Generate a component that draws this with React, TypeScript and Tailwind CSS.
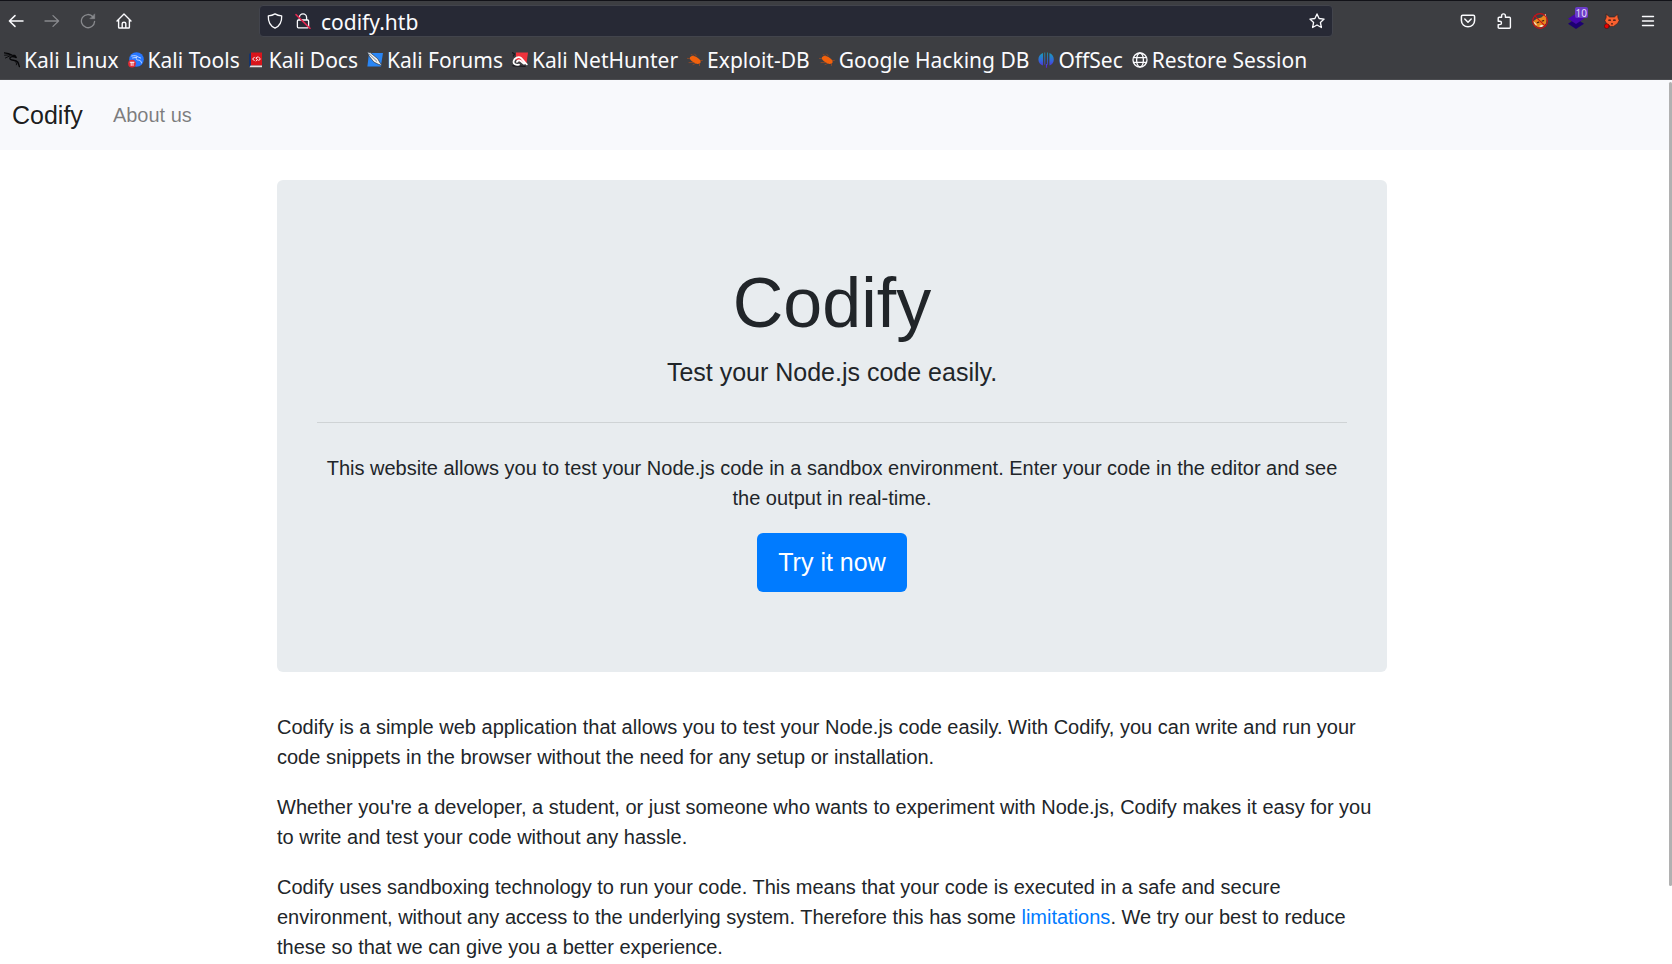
import type { ReactNode } from "react";

type IconProps = { children: ReactNode; className?: string; box?: string };

function Glyph({ children, className = "size-4", box = "0 0 16 16" }: IconProps) {
  return (
    <svg
      viewBox={box}
      className={`${className} shrink-0`}
      fill="none"
      stroke="currentColor"
      strokeWidth="1.3"
      strokeLinecap="round"
      strokeLinejoin="round"
      aria-hidden="true"
    >
      {children}
    </svg>
  );
}

function ToolButton({ label, muted, children }: { label: string; muted?: boolean; children: ReactNode }) {
  return (
    <button
      type="button"
      aria-label={label}
      className={`relative flex size-8 shrink-0 items-center justify-center ${muted ? "text-[#88898d]" : "text-[#fbfbfe]"}`}
    >
      {children}
    </button>
  );
}

const bug = (
  <Glyph>
    <path d="M4.200 2.600l2.600 1.200M.4 6.400l4 .6M2 10.600l4-.2M7.600 2l1.800 2M15.400 8.400l-2.600.2M12.400 13.600l.2-2M6 12.600l2.600-1.200" stroke="#a54c20" strokeWidth=".7" />
    <path d="M3 5.200c1.400-1.800 4.400-1.600 6.800 0 2.400 1.400 4.400 3.800 3.800 5.400-1 1.800-4.600 1.600-6.600 0C5.200 9.400 2 7.200 3 5.200z" fill="#f2610c" stroke="none" />
  </Glyph>
);

const bookmarks: { label: string; icon: ReactNode }[] = [
  {
    label: "Kali Linux",
    icon: (
      <Glyph>
        <path d="M.4.900c3 .2 5.600 1 7.400 2.200l3 .4 1.400 2-2.600-.8C6.800 4.300 5 5.900 6.400 7.300c1.600 1.500 5.400.3 7.200 2.700 1 1.400 1.200 3 1.800 4.600" stroke="#060608" strokeWidth="1.400" />
        <path d="M.6 3.200l5.600-.4M1.400 6l4.600-2.200M11.400 9.600c1 1 1.400 2 1 3.200" stroke="#060608" strokeWidth=".9" />
      </Glyph>
    ),
  },
  {
    label: "Kali Tools",
    icon: (
      <Glyph>
        <circle cx="8.500" cy="7.500" r="7.300" fill="#2777ff" stroke="none" />
        <path d="M3.600 4c3-.8 5.400-.2 7 1.200l2 .8M4.600 6l4.400-.8c-1.800 2-.2 2.800 1.800 3 1.800.2 2.600 1.400 2.800 2.800" stroke="#e8f0ff" strokeWidth=".8" />
        <circle cx="4" cy="11.600" r="3.900" fill="#e02b35" stroke="none" />
        <path d="M2.200 10.300h3.800M3.200 10.300v3.200M5 10.300v3.200" stroke="#fff" strokeWidth=".9" />
      </Glyph>
    ),
  },
  {
    label: "Kali Docs",
    icon: (
      <Glyph>
        <path d="M0 2L2 .5v13.500L0 15z" fill="#14356e" stroke="none" />
        <path d="M2 .5h11v13H2z" fill="#d9151b" stroke="none" />
        <path d="M1.500 13.500H13v1.700H.500z" fill="#e6e1e1" stroke="none" />
        <path d="M5.400 5.200L3.600 7l1.600 1.600M9.600 5.200l1.800 1.600-1.600 1.800M8.600 5L6.800 6.200l1.800 1.400-1.400 1.400" stroke="#fff" strokeWidth="1" />
      </Glyph>
    ),
  },
  {
    label: "Kali Forums",
    icon: (
      <Glyph>
        <path d="M2 1h14l-2.200 13.500H.4z" fill="#2a86f5" stroke="none" />
        <path d="M.2 0l3 .6 7.600 6.200 2.200 4 2.600 3-4.400-1.600-4.400-2.200-4-5z" fill="#f5f5f5" stroke="#27303c" strokeWidth=".7" />
        <path d="M1.800 1.600l8 7.600" stroke="#53606e" strokeWidth=".8" />
      </Glyph>
    ),
  },
  {
    label: "Kali NetHunter",
    icon: (
      <Glyph>
        <path d="M4 .6h12l-1.600 11.600L4 8z" fill="#f0323c" stroke="none" />
        <path d="M.4.600l2.200 1.400-1.200 2M1 13.800l12 .6" stroke="#1b1b20" strokeWidth="1.400" />
        <path d="M7 12.600c-3.200.8-6-.6-5.400-3.400.6-3.200 5-5.200 7.400-3.200 1.600 1.400 3.200 4.200 5.800 6.400M5 9.800c.4-1.400 2.400-1.800 3.800-.8 1.200 1 1.800 2 3.200 2.800" stroke="#fff" strokeWidth="1.800" />
      </Glyph>
    ),
  },
  { label: "Exploit-DB", icon: bug },
  { label: "Google Hacking DB", icon: bug },
  {
    label: "OffSec",
    icon: (
      <Glyph>
        <defs>
          <linearGradient id="offsec" gradientUnits="userSpaceOnUse" x1="0" y1="0" x2="0" y2="16">
            <stop offset="0" stopColor="#15a3b4" />
            <stop offset=".55" stopColor="#3365dc" />
            <stop offset="1" stopColor="#5a1fd0" />
          </linearGradient>
        </defs>
        <path d="M5 .9v12.600C2.600 12.600.4 10.600.4 7.400.4 4.400 2.200 1.800 5 .9zM6.400.4h.8v11.800l-.8.8zM7.900 12h1.200v3.800H7.900zM9.200.4h.8v12.600l-.8-.8zM11.400.9c2.800.9 4.400 3.500 4.400 6.500 0 3.200-2 5.200-4.400 6.100z" fill="url(#offsec)" stroke="none" />
      </Glyph>
    ),
  },
  {
    label: "Restore Session",
    icon: (
      <Glyph>
        <circle cx="8" cy="8" r="7" />
        <ellipse cx="8" cy="8" rx="3.400" ry="7" />
        <path d="M1.600 5.600h12.800M1.600 10.400h12.800" />
      </Glyph>
    ),
  },
];

function BrowserChrome() {
  return (
    <header className="shrink-0 border-t border-[#121218] bg-[#3d3e42] font-['Noto_Sans',sans-serif] text-[#fbfbfe]">
      <div className="flex h-10 items-center pr-2">
        <div className="flex gap-1">
          <ToolButton label="Back">
            <Glyph>
              <path d="M15 8H1.400M7 2.600L1.400 8 7 13.400" strokeWidth="1.500" />
            </Glyph>
          </ToolButton>
          <ToolButton label="Forward" muted>
            <Glyph>
              <path d="M1 8h13.600M9 2.600L14.600 8 9 13.400" />
            </Glyph>
          </ToolButton>
          <ToolButton label="Reload" muted>
            <Glyph>
              <path d="M13 3.800A6.600 6.600 0 1 0 14.600 8.400" />
              <path d="M14.700 1.200v4.500h-4.500z" fill="currentColor" strokeWidth=".6" />
            </Glyph>
          </ToolButton>
          <ToolButton label="Home">
            <Glyph>
              <path d="M1 8l7-7 7 7M2.600 6.800V14.200q0 .8.800.8h9.200q.8 0 .8-.8V6.800M6.200 14.800V10.600q0-1.400 1.800-1.400t1.800 1.400v4.200" strokeWidth="1.400" />
            </Glyph>
          </ToolButton>
        </div>

        <div className="mx-[119px] flex h-8 min-w-0 flex-1 items-center rounded border border-[#42444c] bg-[#272935] px-[7px]">
          <Glyph>
            <path d="M8 .9c2 1.200 4.200 1.800 6.700 2 .2 5.400-1.500 9.800-6.700 12.200C2.800 12.700 1.100 8.300 1.300 2.900 3.800 2.700 6 2.100 8 .9z" />
          </Glyph>
          <Glyph className="ml-3 size-4">
            <path d="M4.400 7V4.400a3.600 3.600 0 0 1 7.200 0V7M3.400 7h9.200q1 0 1 1v5.800q0 1-1 1H3.400q-1 0-1-1V8q0-1 1-1z" />
            <path d="M1 1.600l14 13.800" stroke="#e22850" strokeWidth="1.500" />
          </Glyph>
          <input
            type="text"
            aria-label="Address"
            defaultValue="codify.htb"
            className="ml-2.5 min-w-0 flex-1 bg-transparent pt-0.5 text-[21px] leading-7 outline-none"
          />
          <button type="button" aria-label="Bookmark this page">
            <Glyph>
              <path d="M8 .9l2.100 4.600 5 .6-3.700 3.400 1 5L8 12l-4.400 2.500 1-5L.9 6.100l5-.6z" />
            </Glyph>
          </button>
        </div>

        <div className="flex gap-1">
          <ToolButton label="Save to Pocket">
            <Glyph>
              <path d="M2.700 2.200h10.600q1.300 0 1.300 1.300V7.600a6.600 6.200 0 0 1-13.200 0V3.500q0-1.300 1.300-1.300zM4.800 6L8 9.200 11.200 6" strokeWidth="1.500" />
            </Glyph>
          </ToolButton>
          <ToolButton label="Extensions">
            <Glyph>
              <path d="M5.600 4.200V2.800a1.900 1.900 0 0 1 3.800 0v1.400h4q1 0 1 1v9q0 1-1 1H3.200q-1 0-1-1v-2.600h1.600a1.700 1.700 0 0 0 0-3.400H2.200V5.200q0-1 1-1z" strokeWidth="1.400" />
            </Glyph>
          </ToolButton>
          <ToolButton label="Proxy disabled">
            <Glyph>
              <path d="M1 8.400l3.600-2.600L9.400 4.600l4-3.800 1.200 5.400-.6 4-2.600 3.200-4.600 1.200-4-2.400z" fill="#e8871e" stroke="none" />
              <path d="M1 8.600l2 .8 2.400 3.200-2-.8zM12.600 2.400l1.200-1.400.6 4.400zM7 13l2.400-1 2.600.4-3 1.800z" fill="#f5ead8" stroke="none" />
              <path d="M5.400 9.600l1.400-.4M10.200 8l1.400-.4" stroke="#452111" />
              <circle cx="8" cy="8" r="7.400" stroke="#cb1018" strokeWidth="1.100" />
              <path d="M2.800 2.800l10.400 10.400" stroke="#cb1018" strokeWidth="1.100" />
            </Glyph>
          </ToolButton>
          <ToolButton label="Wappalyzer">
            <Glyph>
              <path d="M0 10.800L8 5.600l8 5.200L8 16z" fill="#1d0072" stroke="none" />
              <path d="M0 5.800L8 .6l8 5.200L8 11z" fill="#4608ad" stroke="none" />
            </Glyph>
            <span className="absolute top-0.5 right-1 flex h-[11px] items-center rounded-xs bg-[#6b3cc8] px-px text-[10px] leading-none text-[#e6dcfa]">
              10
            </span>
          </ToolButton>
          <ToolButton label="Container proxy">
            <Glyph>
              <path d="M2.400 1.200L5.600 4h4.800l3.200-2.800.4 3.800 1.200 2.400-1.600 3L9.600 13.400H6.400l-4-3L.8 7.400 2 5z" fill="#f8602f" stroke="#301b1b" strokeWidth=".6" />
              <path d="M4.800 7.200h1.600M9.600 7.200h1.600M7.600 10.800h.8" stroke="#271414" strokeWidth="1.200" />
              <circle cx="2.800" cy="13.200" r="2.400" fill="#e60000" stroke="#3a0808" strokeWidth=".5" />
            </Glyph>
          </ToolButton>
          <ToolButton label="Menu">
            <Glyph>
              <path d="M2.500 3.500h11M2.500 8h11M2.500 12.500h11" strokeWidth="1.400" />
            </Glyph>
          </ToolButton>
        </div>
      </div>

      <nav aria-label="Bookmarks" className="flex h-[39px] items-center gap-[9px] overflow-hidden border-b border-[#4b4c50] pl-1">
        {bookmarks.map((b) => (
          <a key={b.label} href="#" className="flex shrink-0 items-center gap-1 text-[21px] leading-7 whitespace-nowrap">
            {b.icon}
            {b.label}
          </a>
        ))}
      </nav>
    </header>
  );
}

export default function App() {
  return (
    <div className="flex h-screen flex-col bg-white">
      <BrowserChrome />
      <div className="relative min-h-0 flex-1 overflow-hidden font-['Liberation_Sans',Arial,sans-serif] text-[20px] leading-[30px] text-[#212529]">
        <nav className="flex h-[70px] items-center gap-[30px] bg-[#f8f9fc] px-3">
          <a href="#" className="text-[25px] text-black/90">
            Codify
          </a>
          <a href="#about" className="text-black/50">
            About us
          </a>
        </nav>
        <div className="pr-2">
          <main className="mx-auto max-w-[1110px]">
            <section className="mt-[30px] mb-10 rounded-md bg-[#e8ecef] px-10 py-20 text-center">
              <h1 className="mb-2 text-[70px] leading-[86px]">Codify</h1>
              <p className="text-[25px] leading-9">Test your Node.js code easily.</p>
              <hr className="mt-8 mb-[30px] border-t border-[#cfd3d5]" />
              <p className="mb-5">
                This website allows you to test your Node.js code in a sandbox environment. Enter your code in the
                editor and see the output in real-time.
              </p>
              <a
                href="#editor"
                className="inline-block rounded-md bg-[#007bff] px-[21px] py-[11px] align-top text-[25px] leading-[37px] text-white"
              >
                Try it now
              </a>
            </section>
            <p className="mb-5">
              Codify is a simple web application that allows you to test your Node.js code easily. With Codify, you
              can write and run your code snippets in the browser without the need for any setup or installation.
            </p>
            <p className="mb-5">
              Whether you're a developer, a student, or just someone who wants to experiment with Node.js, Codify makes
              it easy for you to write and test your code without any hassle.
            </p>
            <p>
              Codify uses sandboxing technology to run your code. This means that your code is executed in a safe and
              secure environment, without any access to the underlying system. Therefore this has some{" "}
              <a href="#limitations" className="text-[#007bff]">
                limitations
              </a>
              . We try our best to reduce these so that we can give you a better experience.
            </p>
          </main>
        </div>
        <div className="absolute top-0.5 right-0 h-[91%] w-[3px] rounded-full bg-[#b1b1b1]" />
      </div>
    </div>
  );
}
